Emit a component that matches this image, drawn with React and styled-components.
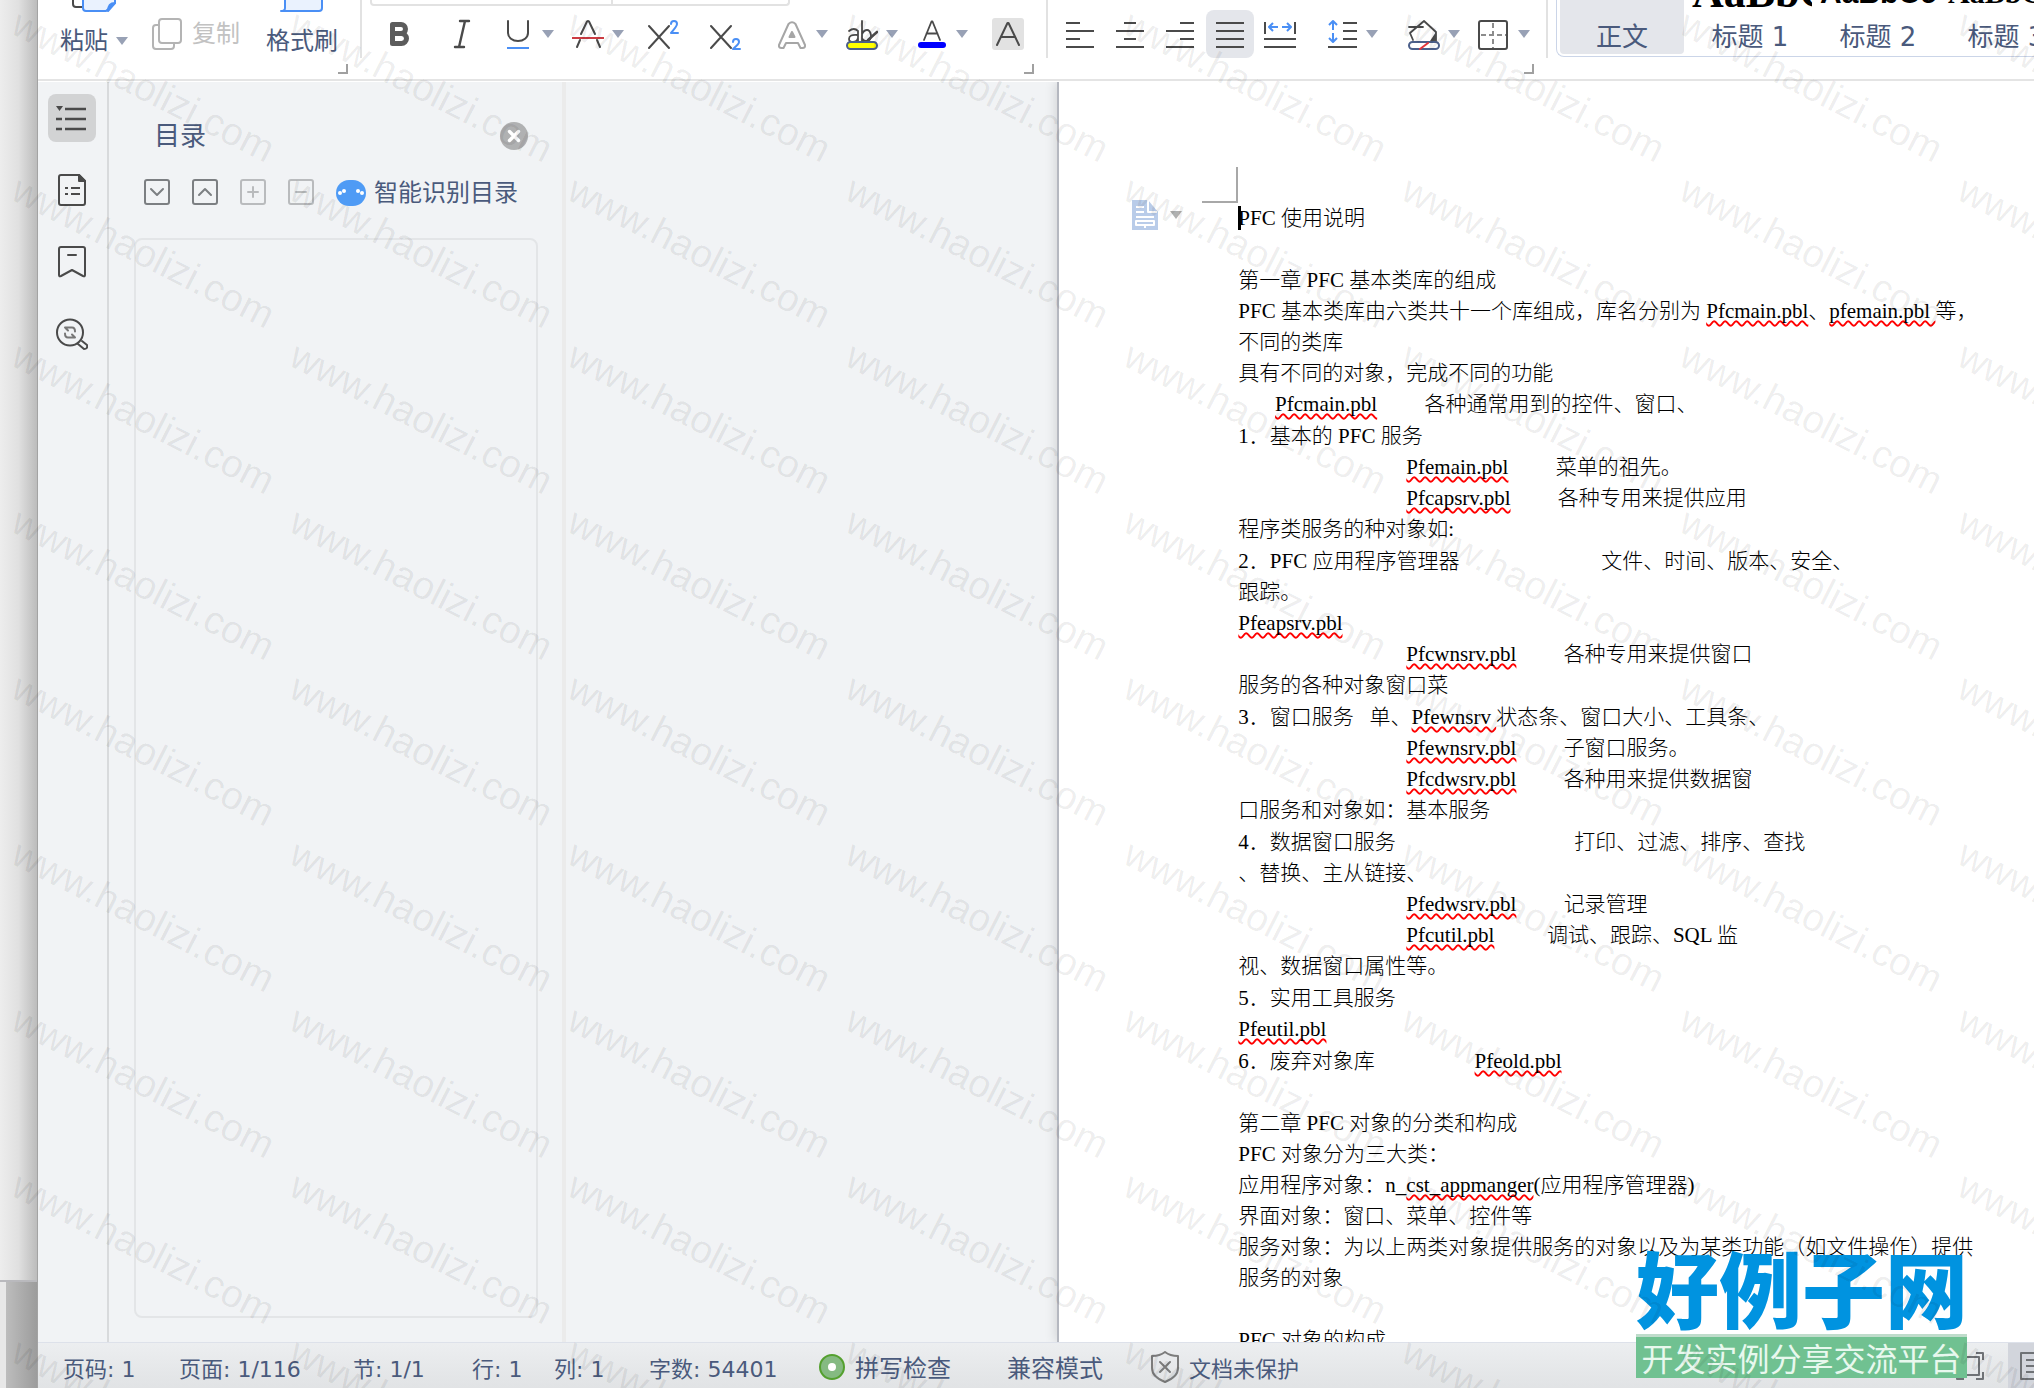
import React, { useState } from 'react';
import styled, { createGlobalStyle } from 'styled-components';

const GlobalStyle = createGlobalStyle`
  * {
    box-sizing: border-box;
  }

  body {
    margin: 0;
    background: #ffffff;
    font-family: 'DejaVu Sans', 'Noto Sans CJK SC', sans-serif;
    color: #4a5a7c;
  }

  button {
    border: none;
    background: none;
    padding: 0;
    margin: 0;
    font: inherit;
    color: inherit;
    cursor: pointer;
  }

  svg {
    display: block;
    flex: none;
  }
`;

/* ---------- icons ---------- */

const Svg = ({ size = 32, h, children, ...rest }) => (
  <svg
    width={size}
    height={h || size}
    viewBox={`0 0 ${size} ${h || size}`}
    fill="none"
    stroke="#4a4a4a"
    strokeWidth="2"
    strokeLinecap="round"
    strokeLinejoin="round"
    aria-hidden="true"
    {...rest}
  >
    {children}
  </svg>
);

const Caret = ({ color = '#98a1b5' }) => (
  <svg width="12" height="8" viewBox="0 0 12 8" aria-hidden="true">
    <path d="M0 0h12L6 8z" fill={color} />
  </svg>
);

const BoldIcon = () => (
  <Svg stroke="#5c5c5c" strokeWidth="5">
    <path d="M8.500 6.500h8.500a4.500 4.500 0 0 1 0 9H8.500zM8.500 15.500h9a5 5 0 0 1 0 10h-9z" />
  </Svg>
);

const ItalicIcon = () => (
  <Svg>
    <path d="M14 3h9M9 29h9M19 3l-6 26" strokeWidth="2.400" />
  </Svg>
);

const UnderlineIcon = () => (
  <Svg>
    <path d="M6 3v12a10 8 0 0 0 20 0V3" />
    <path d="M5 30h22" stroke="#4a8ff5" strokeLinecap="butt" />
  </Svg>
);

const StrikeIcon = () => (
  <Svg>
    <path d="M9 16l6-12.500q1-1 2 0L23 16M5 29l3-7M28 29l-3-7" />
    <path d="M0 20h32" stroke="#cc3b42" strokeLinecap="butt" />
  </Svg>
);

const SuperIcon = () => (
  <Svg>
    <path d="M1 8l20 22M21 8L1 30" />
    <path d="M23 6q0-3 3-3t3 3q0 2-6 9h7" stroke="#4a8ff5" />
  </Svg>
);

const SubIcon = () => (
  <Svg>
    <path d="M1 8l20 22M21 8L1 30" />
    <path d="M23 24q0-3 3-3t3 3q0 2-6 7h7" stroke="#4a8ff5" />
  </Svg>
);

const OutlineAIcon = () => (
  <Svg stroke="#a6a6a6">
    <path d="M3 27L12.500 6q3.500-3.500 7 0L29 27q.500 3-2.500 3h-2l-2.500-5H10l-2.500 5h-2q-3 0-2.500-3z" />
    <path d="M16 14l-2.500 5h5z" fill="#a6a6a6" />
  </Svg>
);

const HighlightIcon = () => (
  <Svg>
    <path d="M3 13q5-4 9 0v10M12 17q-9-1-9 4 0 3 4 3t5-4M16 3v20M16 16q2-4 5-4t4 5q0 6-4 6t-5-3" strokeWidth="1.800" />
    <path d="M22 22l9-8" strokeWidth="2.600" />
    <rect x="1" y="24" width="30" height="7" rx="3.500" fill="#ffff00" stroke="#4b5f8a" />
  </Svg>
);

const FontColorIcon = () => (
  <Svg>
    <path d="M8 22L15.500 3.500h1L24 22M10.500 15.500h11" strokeWidth="1.800" />
    <rect x="2" y="24" width="28" height="6" rx="3" fill="#0000ff" stroke="none" />
  </Svg>
);

const ShadeIcon = () => (
  <Svg>
    <rect width="32" height="32" rx="3" fill="#e2e2e2" stroke="none" />
    <path d="M5 27L15.500 5h1L27 27M9 19h14" />
  </Svg>
);

const Lines = ({ rows }) => (
  <Svg strokeLinecap="butt">
    {rows.map(([from, to], i) => (
      <path key={i} d={`M${from} ${5 + i * 8}H${to}`} />
    ))}
  </Svg>
);

const DistributeIcon = () => (
  <Svg strokeLinecap="butt">
    <path d="M1 4v12M31 4v12M0 21h32M0 29h32" />
    <path d="M14 9H5M9 5L5 9l4 4M18 9h9M23 5l4 4-4 4" stroke="#4a8ff5" />
  </Svg>
);

const SpacingIcon = () => (
  <Svg strokeLinecap="butt">
    <path d="M17 5h14M17 13h14M17 21h14M2 29h29" />
    <path d="M7 12V3M3 7l4-4 4 4M7 15v9M3 20l4 4 4-4" stroke="#4a8ff5" />
  </Svg>
);

const FillIcon = () => (
  <Svg>
    <path d="M5 22L2 15 16 3l12 11v9M1 9h14" strokeWidth="1.800" />
    <path d="M28 14l-6 9h6z" fill="#4a4a4a" stroke="none" />
    <rect x="1" y="24" width="30" height="7" rx="3.500" fill="#ffffff" stroke="#4b5f8a" />
    <path d="M12 31l8-6" stroke="#e2363c" />
  </Svg>
);

const BorderIcon = () => (
  <Svg>
    <rect x="1" y="3" width="28" height="28" rx="2" />
    <path d="M15 5v25M3 17h25" strokeDasharray="5 3" stroke="#8c8c8c" strokeLinecap="butt" />
  </Svg>
);

const CopyIcon = () => (
  <Svg stroke="#b4b4b4">
    <rect x="1" y="7" width="21" height="24" rx="3" />
    <rect x="7" y="1" width="22" height="24" rx="3" fill="#ffffff" />
  </Svg>
);

const PasteIcon = () => (
  <Svg size={44} h={30}>
    <path d="M1 0v22q0 3 3 3h8" />
    <path d="M11 0v26q0 3 3 3h20l9-8V0" fill="#eaf2fe" stroke="#4a8ff5" />
    <path d="M36 29q0-8 7-8z" fill="#4a8ff5" stroke="#4a8ff5" />
  </Svg>
);

const BrushIcon = () => (
  <Svg size={44} h={30}>
    <path d="M5 0v26q0 3-4 3h38q3 0 3-3V0" fill="#eaf2fe" stroke="#4a8ff5" />
  </Svg>
);

const OutlineIcon = () => (
  <Svg strokeLinecap="butt" strokeWidth="2.400">
    <path d="M9 7h21M9 17h21M9 27h21M0 17h6M0 27h6" />
    <path d="M0 4h7L3.500 9z" fill="#4a4a4a" stroke="none" />
  </Svg>
);

const PageListIcon = () => (
  <Svg>
    <path d="M5 1h18l6 6v22q0 2-2 2H5q-2 0-2-2V3q0-2 2-2z" />
    <path d="M23 1v6h6z" fill="#4a4a4a" />
    <path d="M9 14h3M15 14h9M9 20h3M15 20h9" strokeLinecap="butt" />
  </Svg>
);

const BookmarkIcon = () => (
  <Svg>
    <path d="M3 29V3q0-2 2-2h22q2 0 2 2v26q0 2-2 1l-11-6-11 6q-2 1-2-1zM12 9h8" />
  </Svg>
);

const FindIcon = () => (
  <Svg>
    <circle cx="14" cy="14.500" r="13" />
    <path d="M22 26l6 5q4 0 3-4l-5-4" />
    <path d="M9 9.500h7q3 0 3 4M9 9.500l3 3M19 19.500h-7q-3 0-3-4M19 19.500l-3-3" stroke="#777777" />
  </Svg>
);

const boxMarks = {
  down: 'M7 10l6 6 6-6',
  up: 'M7 16l6-6 6 6',
  plus: 'M8 13h10M13 8v10',
  minus: 'M8 13h10',
};

const BoxIcon = ({ kind, muted }) => (
  <Svg size={26} stroke={muted ? '#b9bbbd' : '#7c7f82'}>
    <rect x="1" y="1" width="24" height="24" rx="2" />
    <path d={boxMarks[kind]} />
  </Svg>
);

const RobotIcon = () => (
  <Svg size={30} h={26}>
    <rect width="30" height="26" rx="13" fill="#4f9bf5" stroke="none" />
    <g fill="#ffffff" stroke="none">
      <circle cx="4" cy="13" r="2" />
      <circle cx="8" cy="11" r="2" />
      <circle cx="22" cy="11" r="2" />
      <circle cx="26" cy="13" r="2" />
    </g>
  </Svg>
);

const CloseIcon = () => (
  <Svg size={28}>
    <circle cx="14" cy="14" r="14" fill="#b0b1b2" stroke="none" />
    <path d="M9.500 9.500l9 9M18.500 9.500l-9 9" stroke="#ffffff" strokeWidth="3.400" />
  </Svg>
);

const PageTagIcon = () => (
  <Svg size={26} h={30}>
    <path d="M0 0h16l10 12v18H0z" fill="#b9cce9" stroke="none" />
    <path d="M16 0v12h9M4 7h8M4 12h8M4 17h18M4 21h18v4H4zM13 25v3" stroke="#ffffff" strokeLinecap="butt" />
  </Svg>
);

const SpellIcon = () => (
  <Svg size={26}>
    <circle cx="13" cy="13" r="12" fill="#85ba82" stroke="#54a02f" />
    <circle cx="13" cy="13" r="4" fill="#ffffff" stroke="none" />
  </Svg>
);

const ShieldIcon = () => (
  <Svg size={28} h={32} stroke="#7c7c7c">
    <path d="M14 1q5 4 13 4v12q0 9-13 14Q1 26 1 17V5q8 0 13-4zM9 11l10 10M19 11L9 21" />
  </Svg>
);

const FullScreenIcon = () => (
  <Svg size={28} stroke="#6f7276" strokeLinecap="butt">
    <path d="M1 8V1h7M20 1h7v7M27 20v7h-7M8 27H1v-7" />
    <rect x="5" y="5" width="18" height="18" />
  </Svg>
);

const ReadIcon = () => (
  <Svg size={28} stroke="#6f7276" strokeLinecap="butt">
    <rect x="1" y="1" width="26" height="26" />
    <path d="M6 8h16M6 14h16M6 20h16" />
  </Svg>
);

/* ---------- data ---------- */

const bar = [
  { name: '加粗', icon: <BoldIcon />, gap: 30 },
  { name: '倾斜', icon: <ItalicIcon />, gap: 24 },
  { name: '下划线', icon: <UnderlineIcon />, menu: true, gap: 18 },
  { name: '删除线', icon: <StrikeIcon />, menu: true, gap: 24 },
  { name: '上标', icon: <SuperIcon />, gap: 30 },
  { name: '下标', icon: <SubIcon />, gap: 34 },
  { name: '文字效果', icon: <OutlineAIcon />, menu: true, gap: 18 },
  { name: '突出显示', icon: <HighlightIcon />, menu: true, gap: 18 },
  { name: '字体颜色', icon: <FontColorIcon />, menu: true, gap: 24 },
  { name: '字符底纹', icon: <ShadeIcon />, gap: 0 },
];

const aligns = [
  { name: '左对齐', icon: <Lines rows={[[2, 16], [2, 30], [2, 16], [2, 30]]} /> },
  { name: '居中对齐', icon: <Lines rows={[[10, 22], [2, 30], [10, 22], [2, 30]]} /> },
  { name: '右对齐', icon: <Lines rows={[[16, 30], [2, 30], [16, 30], [2, 30]]} /> },
  { name: '两端对齐', icon: <Lines rows={[[2, 30], [2, 30], [2, 30], [2, 30]]} /> },
  { name: '分散对齐', icon: <DistributeIcon /> },
];

const textStyles = [
  { name: '正文', sample: 'AaBbCcDd', kind: 'body' },
  { name: '标题 1', sample: 'AaBbC', kind: 'h1' },
  { name: '标题 2', sample: 'AaBbCc', kind: 'h2' },
  { name: '标题 3', sample: 'AaBbCc', kind: 'h3' },
];

const rail = [
  { name: '目录', icon: <OutlineIcon /> },
  { name: '章节', icon: <PageListIcon /> },
  { name: '书签', icon: <BookmarkIcon /> },
  { name: '查找和替换', icon: <FindIcon /> },
];

// *word* marks a spelling error, a number is a run of spaces
const lines = [
  'PFC 使用说明',
  '',
  '第一章 PFC 基本类库的组成',
  'PFC 基本类库由六类共十一个库组成，库名分别为 *Pfcmain.pbl*、*pfemain.pbl *等，',
  '不同的类库',
  '具有不同的对象，完成不同的功能',
  [7, '*Pfcmain.pbl*', 9, '各种通常用到的控件、窗口、'],
  '1．基本的 PFC 服务',
  [32, '*Pfemain.pbl*', 9, '菜单的祖先。'],
  [32, '*Pfcapsrv.pbl*', 9, '各种专用来提供应用'],
  '程序类服务的种对象如:',
  ['2．PFC 应用程序管理器', 27, '文件、时间、版本、安全、'],
  '跟踪。',
  '*Pfeapsrv.pbl*',
  [32, '*Pfcwnsrv.pbl*', 9, '各种专用来提供窗口'],
  '服务的各种对象窗口菜',
  ['3．窗口服务', 3, '单、*Pfewnsrv *状态条、窗口大小、工具条、'],
  [32, '*Pfewnsrv.pbl*', 9, '子窗口服务。'],
  [32, '*Pfcdwsrv.pbl*', 9, '各种用来提供数据窗'],
  '口服务和对象如：基本服务',
  ['4．数据窗口服务', 34, '打印、过滤、排序、查找'],
  '、替换、主从链接、',
  [32, '*Pfedwsrv.pbl*', 9, '记录管理'],
  [32, '*Pfcutil.pbl*', 10, '调试、跟踪、SQL 监'],
  '视、数据窗口属性等。',
  '5．实用工具服务',
  '*Pfeutil.pbl*',
  ['6．废弃对象库', 19, '*Pfeold.pbl*'],
  '',
  '第二章 PFC 对象的分类和构成',
  'PFC 对象分为三大类：',
  '应用程序对象：n_*cst_appmanger*(应用程序管理器)',
  '界面对象：窗口、菜单、控件等',
  '服务对象：为以上两类对象提供服务的对象以及为某类功能（如文件操作）提供',
  '服务的对象',
  '',
  'PFC 对象的构成',
];

const counters = [
  { text: '页码: 1', width: 116 },
  { text: '页面: 1/116', width: 174 },
  { text: '节: 1/1', width: 119 },
  { text: '行: 1', width: 82 },
  { text: '列: 1', width: 95 },
  { text: '字数: 54401', width: 170 },
];

/* ---------- parts ---------- */

const toText = (line) =>
  [].concat(line).map((p) => (typeof p === 'number' ? ' '.repeat(p) : p)).join('');

const Paragraph = ({ line }) => {
  const text = toText(line);
  return (
    <TextLine $item={/^\d．/.test(text)}>
      {text.split('*').map((part, i) => (i % 2 ? <Misspelt key={i}>{part}</Misspelt> : part))}
    </TextLine>
  );
};

const Ribbon = () => {
  const [align, setAlign] = useState('两端对齐');
  const [current, setCurrent] = useState('正文');

  return (
    <RibbonBar>
      <Group>
        <Clipboard>
          <BigButton>
            <PasteIcon />
            <span>粘贴 <Caret /></span>
          </BigButton>
          <CopyButton disabled>
            <CopyIcon />
            复制
          </CopyButton>
          <BigButton>
            <BrushIcon />
            <span>格式刷</span>
          </BigButton>
        </Clipboard>
        <Launcher aria-label="剪贴板设置" />
      </Group>

      <Group>
        <FontArea>
          <FontBoxes>
            <span />
            <span />
          </FontBoxes>
          <ButtonRow>
            {bar.map((b) => (
              <ToolButton key={b.name} aria-label={b.name} $gap={b.gap}>
                {b.icon}
                {b.menu && <Caret />}
              </ToolButton>
            ))}
          </ButtonRow>
        </FontArea>
        <Launcher aria-label="字体设置" />
      </Group>

      <Group>
        <AlignArea>
          <AlignSet>
            {aligns.map((a) => (
              <AlignButton
                key={a.name}
                aria-label={a.name}
                $active={a.name === align}
                onClick={() => setAlign(a.name)}
              >
                {a.icon}
              </AlignButton>
            ))}
          </AlignSet>
          <ToolButton aria-label="行距" $gap={30}><SpacingIcon /><Caret /></ToolButton>
          <ToolButton aria-label="底纹颜色" $gap={18}><FillIcon /><Caret /></ToolButton>
          <ToolButton aria-label="边框" $gap={0}><BorderIcon /><Caret /></ToolButton>
        </AlignArea>
        <Launcher aria-label="段落设置" />
      </Group>

      <StyleGallery>
        {textStyles.map((s) => (
          <StyleButton key={s.name} $active={s.name === current} onClick={() => setCurrent(s.name)}>
            <Sample $kind={s.kind}>{s.sample}</Sample>
            <span>{s.name}</span>
          </StyleButton>
        ))}
      </StyleGallery>
    </RibbonBar>
  );
};

const OutlinePanel = () => (
  <Panel>
    <PanelHead>
      <h2>目录</h2>
      <button aria-label="关闭"><CloseIcon /></button>
    </PanelHead>
    <PanelTools>
      <button aria-label="展开"><BoxIcon kind="down" /></button>
      <button aria-label="收起"><BoxIcon kind="up" /></button>
      <button aria-label="升级"><BoxIcon kind="plus" muted /></button>
      <button aria-label="降级"><BoxIcon kind="minus" muted /></button>
      <SmartButton>
        <RobotIcon />
        智能识别目录
      </SmartButton>
    </PanelTools>
    <OutlineList />
  </Panel>
);

const App = () => {
  const [tab, setTab] = useState('目录');

  return (
    <>
      <GlobalStyle />
      <Screen>
        <Backdrop>
          <BackdropFoot />
        </Backdrop>
        <Window>
          <Ribbon />
          <Workspace>
            <Rail>
              {rail.map((r) => (
                <RailButton
                  key={r.name}
                  aria-label={r.name}
                  $active={r.name === tab}
                  onClick={() => setTab(r.name)}
                >
                  {r.icon}
                </RailButton>
              ))}
            </Rail>
            <OutlinePanel />
            <Gutter />
            <Page>
              <CropMark />
              <PageTag aria-label="页面选项">
                <PageTagIcon />
                <Caret color="#b0b0b0" />
              </PageTag>
              <DocText>
                <TextCursor />
                {lines.map((line, i) => (
                  <Paragraph key={i} line={line} />
                ))}
              </DocText>
            </Page>
          </Workspace>
          <StatusBar>
            {counters.map((c) => (
              <Counter key={c.text} $width={c.width}>{c.text}</Counter>
            ))}
            <StatusButton $gap={56}><SpellIcon />拼写检查</StatusButton>
            <StatusButton $gap={48}>兼容模式</StatusButton>
            <StatusButton $small $gap={0}><ShieldIcon />文档未保护</StatusButton>
            <ViewButtons>
              <button aria-label="全屏显示"><FullScreenIcon /></button>
              <ReadButton aria-label="页面视图"><ReadIcon /></ReadButton>
            </ViewButtons>
          </StatusBar>
        </Window>
        <SiteLogo>
          <strong>好例子网</strong>
          <span>开发实例分享交流平台</span>
        </SiteLogo>
        <Watermark aria-hidden="true">
          {Array.from({ length: 72 }, (_, i) => (
            <span key={i}>www.haolizi.com</span>
          ))}
        </Watermark>
      </Screen>
    </>
  );
};

/* ---------- styles ---------- */

const Screen = styled.div`
  position: relative;
  display: flex;
  height: 100vh;
  overflow: hidden;
`;

const Backdrop = styled.div`
  flex: 0 0 38px;
  display: flex;
  flex-direction: column;
  justify-content: flex-end;
  background: linear-gradient(to right, #ededed, #e0e0e0 50%, #bcbcbc);
  border-right: 1px solid #a3a3a3;
`;

const BackdropFoot = styled.div`
  height: 108px;
  border-top: 2px solid #b9b9bd;
  background: linear-gradient(to right, #e8e8e8 6px, #bdbdbd 6px, #9c9c9c);
`;

const Window = styled.div`
  flex: 1;
  min-width: 0;
  display: flex;
  flex-direction: column;
  background: #f1f3f5;
`;

const RibbonBar = styled.div`
  flex: none;
  display: flex;
  height: 81px;
  overflow: hidden;
  background: #ffffff;
  border-bottom: 2px solid #e4e4e4;
`;

const Group = styled.div`
  position: relative;
  flex: none;

  &::after {
    content: '';
    position: absolute;
    top: 0;
    right: 0;
    width: 2px;
    height: 58px;
    background: #e2e2e2;
  }
`;

const Launcher = styled.button`
  position: absolute;
  right: 14px;
  top: 64px;
  width: 10px;
  height: 10px;
  border-right: 2px solid #a0a0a0;
  border-bottom: 2px solid #a0a0a0;
`;

const Clipboard = styled.div`
  display: flex;
  align-items: flex-end;
  height: 58px;
  padding: 0 24px 0 22px;
  font-size: 24px;
  line-height: 34px;
`;

const BigButton = styled.button`
  display: flex;
  flex-direction: column;
  align-items: center;
  gap: 12px;
  line-height: 34px;

  span {
    display: flex;
    align-items: center;
    gap: 8px;
  }
`;

const CopyButton = styled.button`
  display: flex;
  align-items: center;
  gap: 8px;
  height: 48px;
  margin: 0 26px 0 24px;
  color: #c2c2c2;
`;

const FontArea = styled.div`
  padding: 0 24px 0 22px;
`;

const FontBoxes = styled.div`
  display: flex;
  width: 420px;
  height: 6px;
  margin: 0 0 4px -14px;
  border: 2px solid #e2e2e2;
  border-top: none;
  border-radius: 0 0 4px 4px;

  span {
    flex: 1;
  }

  span:first-child {
    flex: 0 0 241px;
    border-right: 2px solid #e2e2e2;
  }
`;

const ButtonRow = styled.div`
  display: flex;
  height: 48px;
`;

const ToolButton = styled.button`
  display: flex;
  align-items: center;
  gap: 8px;
  height: 48px;
  margin-right: ${(p) => p.$gap}px;
`;

const AlignArea = styled.div`
  display: flex;
  padding: 10px 18px 0 8px;
`;

const AlignSet = styled.div`
  display: flex;
  gap: 2px;
  margin-right: 22px;
`;

const AlignButton = styled.button`
  display: flex;
  align-items: center;
  justify-content: center;
  width: 48px;
  height: 48px;
  border-radius: 8px;
  background: ${(p) => (p.$active ? '#e4e6eb' : 'none')};
`;

const StyleGallery = styled.div`
  flex: 1;
  min-width: 0;
  display: flex;
  gap: 4px;
  height: 57px;
  margin-left: 8px;
  padding: 0 0 2px 3px;
  overflow: hidden;
  border-left: 1px solid #cbd5e8;
  border-bottom: 1px solid #cbd5e8;
  border-bottom-left-radius: 8px;
`;

const StyleButton = styled.button`
  flex: 0 0 124px;
  display: flex;
  flex-direction: column;
  justify-content: flex-end;
  overflow: hidden;
  height: 54px;
  border-radius: 0 0 4px 4px;
  background: ${(p) => (p.$active ? '#e4e6eb' : 'none')};
  font-size: 26px;
  line-height: 34px;
`;

const sampleFonts = {
  body: "22px/54px 'Liberation Serif', serif",
  h1: "bold 44px/54px 'Liberation Serif', serif",
  h2: "bold 30px/54px 'Liberation Sans', sans-serif",
  h3: "bold 30px/54px 'Liberation Serif', serif",
};

const Sample = styled.span`
  padding-left: 4px;
  font: ${(p) => sampleFonts[p.$kind]};
  color: ${(p) => (p.$kind === 'body' ? '#8a8a8a' : '#000000')};
  text-align: ${(p) => (p.$kind === 'body' ? 'center' : 'left')};
  white-space: nowrap;
`;

const Workspace = styled.div`
  flex: 1;
  min-height: 0;
  display: flex;
  overflow: hidden;
  border-top: 1px solid #ffffff;
`;

const Rail = styled.nav`
  flex: 0 0 71px;
  display: flex;
  flex-direction: column;
  align-items: center;
  gap: 24px;
  padding: 12px 1px 0 0;
  border-right: 2px solid #d8dadc;
`;

const RailButton = styled.button`
  display: flex;
  align-items: center;
  justify-content: center;
  width: 48px;
  height: 48px;
  border-radius: 8px;
  background: ${(p) => (p.$active ? '#d2d3d4' : 'none')};
`;

const Panel = styled.aside`
  flex: 0 0 457px;
  display: flex;
  flex-direction: column;
  padding: 36px 24px 24px 25px;
  border-right: 4px solid #ebebeb;
`;

const PanelHead = styled.div`
  display: flex;
  align-items: center;
  justify-content: space-between;
  height: 36px;
  padding: 0 10px 0 20px;

  h2 {
    margin: 0;
    font-size: 26px;
    font-weight: 400;
    line-height: 32px;
  }
`;

const PanelTools = styled.div`
  display: flex;
  align-items: center;
  gap: 22px;
  height: 36px;
  margin: 20px 0 28px;
  padding-left: 10px;
`;

const SmartButton = styled.button`
  display: flex;
  align-items: center;
  gap: 8px;
  padding-top: 2px;
  font-size: 24px;
  line-height: 36px;
`;

const OutlineList = styled.div`
  flex: 1;
  border: 2px solid #e3e5e7;
  border-radius: 8px;
`;

const Gutter = styled.div`
  flex: 492;
`;

const Page = styled.main`
  flex: 976;
  min-width: 0;
  display: grid;
  grid-template-columns: 179px 1fr;
  grid-template-rows: 121px auto;
  align-items: start;
  background: #ffffff;
  border-left: 2px solid #b5b8c0;
  box-shadow: 0 0 12px rgba(0, 0, 0, 0.16);
`;

const CropMark = styled.div`
  width: 36px;
  height: 36px;
  align-self: end;
  justify-self: end;
  border-right: 2px solid #a8a8a8;
  border-bottom: 2px solid #a8a8a8;
`;

const PageTag = styled.button`
  grid-row: 2;
  display: flex;
  align-items: center;
  gap: 12px;
  height: 24px;
  padding-left: 73px;
`;

const DocText = styled.article`
  position: relative;
  grid-row: 2;
  grid-column: 2;
  overflow: hidden;
  font-family: 'Liberation Serif', 'Noto Sans CJK SC', serif;
  font-size: 21px;
  font-weight: 300;
  line-height: 31px;
  color: #000000;
`;

const TextCursor = styled.i`
  position: absolute;
  left: 0;
  top: 3px;
  width: 3px;
  height: 24px;
  background: #000000;
`;

const TextLine = styled.p`
  height: 31px;
  margin: ${(p) => (p.$item ? '1px 0 0' : '0')};
  white-space: pre;
`;

const Misspelt = styled.span`
  text-decoration: underline wavy #ff0000 2px;
  text-decoration-skip-ink: none;
  text-underline-offset: 2px;
`;

const StatusBar = styled.footer`
  flex: none;
  display: flex;
  align-items: center;
  height: 46px;
  padding-left: 25px;
  border-top: 1px solid #dde1ea;
  background: linear-gradient(#eceef0, #e1e3e5);
  font-size: 24px;
  white-space: nowrap;
`;

const Counter = styled.span`
  flex: 0 0 ${(p) => p.$width}px;
  padding-top: 2px;
  font-size: 22px;
`;

const StatusButton = styled.button`
  display: flex;
  align-items: center;
  gap: 10px;
  padding-top: 2px;
  margin-right: ${(p) => p.$gap}px;
  font-size: ${(p) => (p.$small ? 22 : 24)}px;
`;

const ViewButtons = styled.div`
  display: flex;
  align-items: center;
  align-self: stretch;
  gap: 24px;
  margin-left: auto;
`;

const ReadButton = styled.button`
  width: 26px;
  height: 100%;
  overflow: hidden;
  padding-left: 12px;
  background: #d2d5dc;
`;

const SiteLogo = styled.div`
  position: absolute;
  right: 67px;
  bottom: 10px;
  width: 331px;
  font-family: 'Noto Sans CJK SC', sans-serif;
  text-align: center;
  white-space: nowrap;

  strong {
    display: block;
    margin-bottom: 4px;
    font-size: 83px;
    font-weight: 900;
    line-height: 88px;
    color: #0093e0;
  }

  span {
    display: block;
    border-top: 3px solid #bfdccb;
    background: #70c191;
    font-size: 32px;
    line-height: 41px;
    color: #e8f8ee;
  }
`;

const Watermark = styled.div`
  position: absolute;
  inset: 0;
  display: grid;
  grid-template-columns: repeat(8, 278px);
  grid-auto-rows: 166px;
  padding: 3px 0 0 24px;
  overflow: hidden;
  pointer-events: none;
  font-family: 'Liberation Sans', sans-serif;
  font-size: 39px;
  line-height: 39px;
  color: rgba(0, 0, 0, 0.07);

  span {
    justify-self: start;
    align-self: start;
    transform: rotate(27deg);
    transform-origin: 0 0;
    white-space: nowrap;
  }
`;

export default App;
